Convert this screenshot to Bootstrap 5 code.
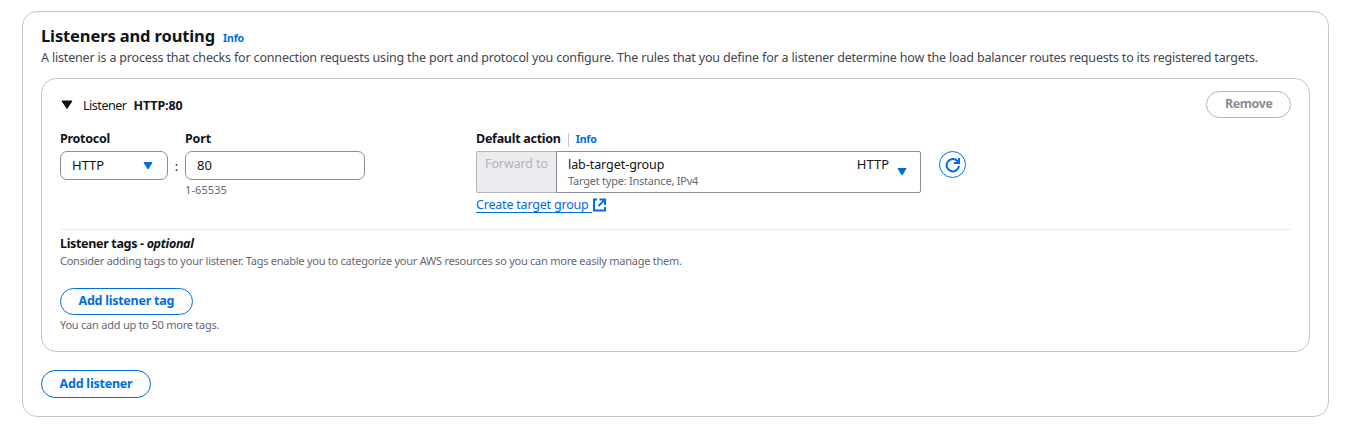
<!DOCTYPE html>
<html lang="en">
<head>
<meta charset="utf-8">
<meta name="viewport" content="width=device-width, initial-scale=1">
<title>Listeners and routing</title>
<link href="https://cdn.jsdelivr.net/npm/bootstrap@5.3.0/dist/css/bootstrap.min.css" rel="stylesheet">
<style>
body{font:12.5px/20px "Noto Sans",sans-serif;color:#0f141a;background:#fff;height:427px;overflow:hidden;white-space:nowrap}
.panel{margin:11px 21px 0 22px;height:406px;border:1px solid #c6c6cd;border-radius:15px;padding:12px 18px 0}
.panel-title{font-size:16.5px;line-height:24px;letter-spacing:-.125px;font-weight:700;margin:0}
.panel-desc{color:#424650;line-height:20px;letter-spacing:-.175px;margin:0 0 10px}
.listener{border:1px solid #c6c6cd;border-radius:15px;height:274px;padding:12px 18px 0}
.listener-head{height:27px;margin-bottom:12px}
.caption{font-weight:700;line-height:18px;letter-spacing:-.27px}
.info{font-size:10.5px;font-weight:700;color:#006ce0;letter-spacing:-.15px;text-decoration:none}
.hint{font-size:11px;color:#656871;line-height:16px;letter-spacing:-.25px}
.pill{--bs-btn-padding-y:0;--bs-btn-padding-x:17.5px;--bs-btn-color:#006ce0;--bs-btn-border-color:#006ce0;--bs-btn-font-size:12.5px;--bs-btn-font-weight:700;--bs-btn-line-height:24px;--bs-btn-border-radius:20px;--bs-btn-disabled-color:#8c8c94;--bs-btn-disabled-border-color:#b4b4bb;--bs-btn-disabled-opacity:1;height:27px;line-height:24px;padding-bottom:1px;letter-spacing:-.25px}
.field{border:1px solid #8c8c94;border-radius:7px;height:29px;padding:0 11px;font-size:13px;line-height:27px;margin-top:3px}
.protocol{width:108px}
.port{width:180px}
.action{width:445px}
.action-select{height:42px;margin-top:3px}
.action-prefix{width:80px;background:#ebebf0;border:1px solid #b4b4bb;border-right:0;border-radius:2px 0 0 2px;color:#b4b4bb;padding:2px 0 0 8px;letter-spacing:-.1px}
.action-value{border:1px solid #8c8c94;border-radius:0 2px 2px 0;padding:3px 12px 0 11px}
.refresh{width:27px;height:27px;border:1px solid #006ce0}
.create{color:#006ce0;letter-spacing:-.2px;line-height:17px;height:18px;border-bottom:1px solid #006ce0;text-decoration:none}
.rule{height:1px;background:#ebebf0;margin-top:16px}
svg{display:block;flex:none}
</style>
</head>
<body>
<section class="panel">
  <header class="d-flex">
    <h2 class="panel-title">Listeners and routing</h2>
    <a class="info" href="#" style="margin:5px 0 0 8px;line-height:19px;height:19px">Info</a>
  </header>
  <p class="panel-desc">A listener is a process that checks for connection requests using the port and protocol you configure. The rules that you define for a listener determine how the load balancer routes requests to its registered targets.</p>
  <div class="listener">
    <div class="listener-head d-flex align-items-center">
      <svg width="14" height="10" viewBox="0 0 14 10"><path d="M2 1h10L7 8.5z" fill="#0f141a" stroke="#0f141a" stroke-linejoin="round"/></svg>
      <span style="margin:2px 0 0 9px;letter-spacing:-.47px">Listener</span>
      <b style="margin:2px 0 0 7px;letter-spacing:-.12px">HTTP:80</b>
      <button class="btn pill ms-auto" style="letter-spacing:-.4px" disabled>Remove</button>
    </div>
    <div class="d-flex align-items-start">
      <div class="protocol">
        <div class="caption">Protocol</div>
        <div class="field d-flex align-items-center justify-content-between"><span>HTTP</span>
          <svg width="14" height="10" viewBox="1 0 14 10"><path d="M3 1.5h8L7 8z" fill="#006ce0" stroke="#006ce0" stroke-linejoin="round"/></svg>
        </div>
      </div>
      <span class="text-center" style="width:17px;padding-top:27px">:</span>
      <div class="port">
        <div class="caption" style="letter-spacing:-.16px">Port</div>
        <div class="field">80</div>
        <div class="hint" style="letter-spacing:.1px;margin-top:2px">1-65535</div>
      </div>
      <div class="action" style="margin-left:111px">
        <div class="d-flex align-items-center" style="height:18px">
          <span class="caption">Default action</span>
          <span style="width:1px;height:14px;background:#c6c6cd;margin:2px 7px 0"></span>
          <a class="info" href="#">Info</a>
        </div>
        <div class="action-select d-flex">
          <div class="action-prefix">Forward to</div>
          <div class="action-value d-flex flex-grow-1">
            <div>
              <div style="line-height:19px;letter-spacing:-.06px">lab-target-group</div>
              <div class="hint" style="line-height:13px;letter-spacing:-.23px">Target type: Instance, IPv4</div>
            </div>
            <span class="ms-auto" style="font-size:13px;line-height:19px">HTTP</span>
            <svg style="margin:12px 0 0 7px" width="12" height="10" viewBox="1 0 12 10"><path d="M3 1.5h8L7 8z" fill="#006ce0" stroke="#006ce0" stroke-linejoin="round"/></svg>
          </div>
        </div>
        <div class="d-flex" style="margin-top:2px">
          <a class="create" href="#" style="padding:1px 3px 0 0">Create target group</a>
          <svg width="16" height="16" viewBox="0 0 16 16" style="margin:2px 0 0 -1px" fill="none" stroke="#006ce0" stroke-width="2"><path d="M6 2.500H3v11h11V10M8.500 2.500H14v5.500M13.600 2.900 7.500 9"/></svg>
        </div>
      </div>
      <button class="refresh rounded-circle bg-white p-0 d-flex align-items-center justify-content-center" style="margin:21px 0 0 18px" aria-label="Refresh">
        <svg width="16" height="16" viewBox="0 0 16 16" fill="none" stroke="#006ce0" stroke-width="2"><path d="M14 8.800A6.200 6.200 0 1 1 12.400 4L14 5.500M14 1v5H9"/></svg>
      </button>
    </div>
    <div class="rule"></div>
    <div class="caption" style="margin-top:5px;letter-spacing:-.33px">Listener tags - <em>optional</em></div>
    <div class="hint">Consider adding tags to your listener. Tags enable you to categorize your AWS resources so you can more easily manage them.</div>
    <button class="btn pill d-block" style="margin-top:19px">Add listener tag</button>
    <div class="hint" style="margin-top:2px;letter-spacing:-.23px">You can add up to 50 more tags.</div>
  </div>
  <button class="btn pill d-block" style="margin-top:18px;height:28px;letter-spacing:-.21px">Add listener</button>
</section>
<script src="https://cdn.jsdelivr.net/npm/bootstrap@5.3.0/dist/js/bootstrap.bundle.min.js"></script>
</body>
</html>
